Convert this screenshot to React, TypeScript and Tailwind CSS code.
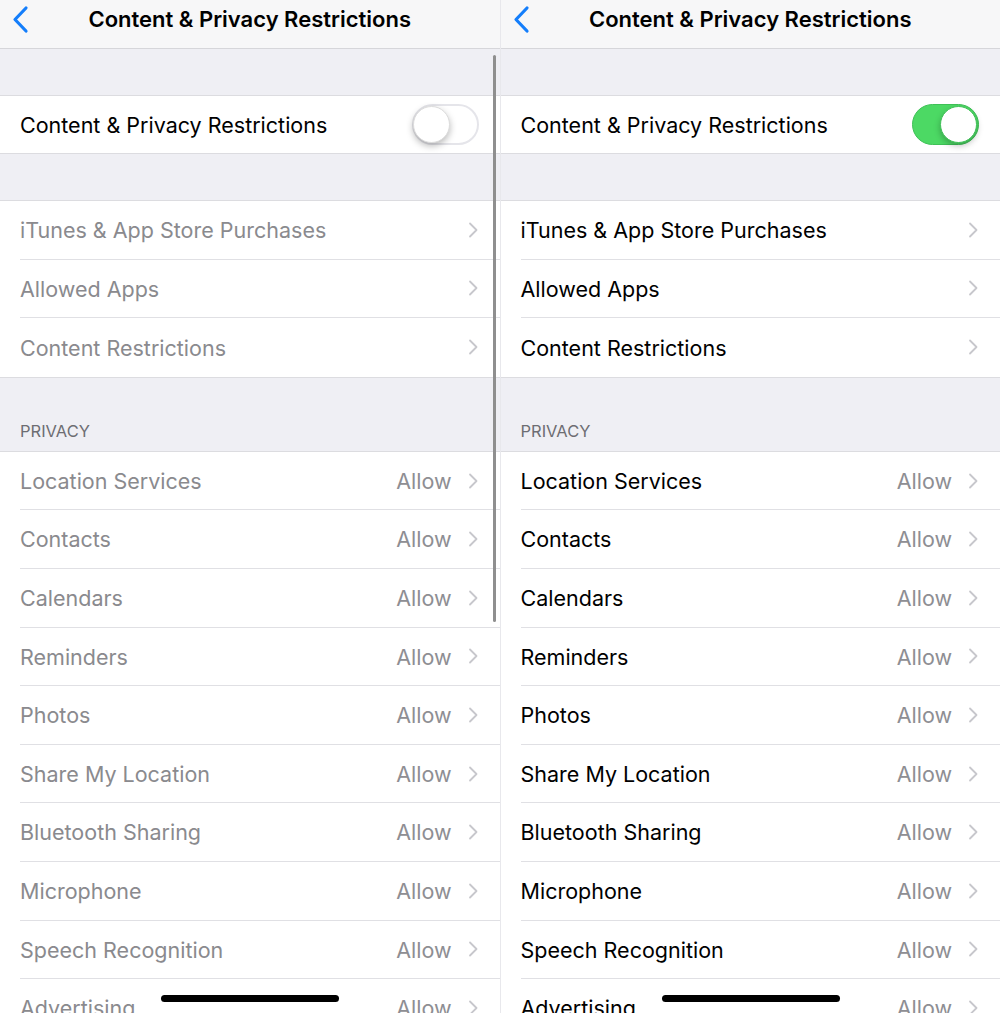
import React from "react";

const font = { fontFamily: '"Inter", "Roboto", "Liberation Sans", sans-serif' };

function Chevron() {
  return (
    <svg width="10" height="16" viewBox="0 0 10 16" className="shrink-0">
      <path d="M2 1.5 L8.5 8 L2 14.5" fill="none" stroke="#c7c7cc" strokeWidth="1.8" strokeLinecap="round" strokeLinejoin="round" />
    </svg>
  );
}

function Toggle({ on }: { on: boolean }) {
  if (on) {
    return (
      <div className="relative w-[67px] h-[41px] rounded-full bg-[#4cd964] border border-[#3fc157] shrink-0">
        <div className="absolute right-[1px] top-[1px] w-[37px] h-[37px] rounded-full bg-white shadow-[0_3px_6px_rgba(0,0,0,0.25)] border border-[#3fc157]" />
      </div>
    );
  }
  return (
    <div className="relative w-[67px] h-[41px] rounded-full bg-white border-2 border-[#e5e5ea] shrink-0">
      <div className="absolute left-[-1px] top-[0px] w-[37px] h-[37px] rounded-full bg-white shadow-[0_3px_7px_rgba(0,0,0,0.28)] border border-[#dcdcdc]" />
    </div>
  );
}

function Row({ label, value, on, last }: { label: string; value?: string; on: boolean; last?: boolean }) {
  return (
    <div className="pl-[20px] bg-white">
      <div className={`h-[58.6px] flex items-center pr-[22px] ${last ? "" : "border-b border-[#e0e0e4]"}`}>
        <span className={`flex-1 text-[21.5px] leading-none pt-[2px] ${on ? "text-black" : "text-[#8a8a8e]"}`}>{label}</span>
        {value && <span className="text-[21.5px] leading-none pt-[2px] text-[#8e8e93] mr-[16px]">{value}</span>}
        <Chevron />
      </div>
    </div>
  );
}

function Panel({ on }: { on: boolean }) {
  const privacy = [
    "Location Services",
    "Contacts",
    "Calendars",
    "Reminders",
    "Photos",
    "Share My Location",
    "Bluetooth Sharing",
    "Microphone",
    "Speech Recognition",
    "Advertising",
  ];
  return (
    <div className="relative w-[500px] h-[1013px] overflow-hidden bg-[#efeff4]" style={font}>
      <div className="h-[49px] bg-[#f7f7f8] border-b border-[#d6d6da] flex items-center relative">
        <svg width="20" height="30" viewBox="0 0 20 30" className="absolute left-[10px] top-[5px]">
          <path d="M16 3 L5 14.5 L16 26" fill="none" stroke="#147efb" strokeWidth="3.2" strokeLinecap="round" strokeLinejoin="round" />
        </svg>
        <div className="w-full text-center text-[22px] leading-none font-semibold text-black -mt-[10px]">Content &amp; Privacy Restrictions</div>
      </div>
      <div className="h-[46px]" />
      <div className="bg-white border-t border-b border-[#dcdce0] h-[59px] flex items-center pl-[20px] pr-[21px]">
        <span className="flex-1 text-[21.5px] leading-none pt-[2px] text-black">Content &amp; Privacy Restrictions</span>
        <Toggle on={on} />
      </div>
      <div className="h-[46px]" />
      <div className="border-t border-b border-[#dcdce0]">
        <Row label="iTunes & App Store Purchases" on={on} />
        <Row label="Allowed Apps" on={on} />
        <Row label="Content Restrictions" on={on} last />
      </div>
      <div className="h-[73px] flex items-end pl-[20px] pb-[11px]">
        <span className="text-[16.5px] leading-none text-[#6d6d72]">PRIVACY</span>
      </div>
      <div className="border-t border-[#dcdce0]">
        {privacy.map((p) => (
          <Row key={p} label={p} value="Allow" on={on} />
        ))}
      </div>
      {!on && <div className="absolute left-[493px] top-[55px] w-[3px] h-[567px] rounded-full bg-[#8f8f8f]" />}
      <div className="absolute left-[161px] top-[995px] w-[178px] h-[7px] rounded-full bg-black" />
    </div>
  );
}

export default function App() {
  return (
    <div className="w-[1000px] h-[1013px] flex overflow-hidden bg-white">
      <Panel on={false} />
      <div className="w-0 border-l border-[#e8e8ec]" />
      <Panel on={true} />
    </div>
  );
}
